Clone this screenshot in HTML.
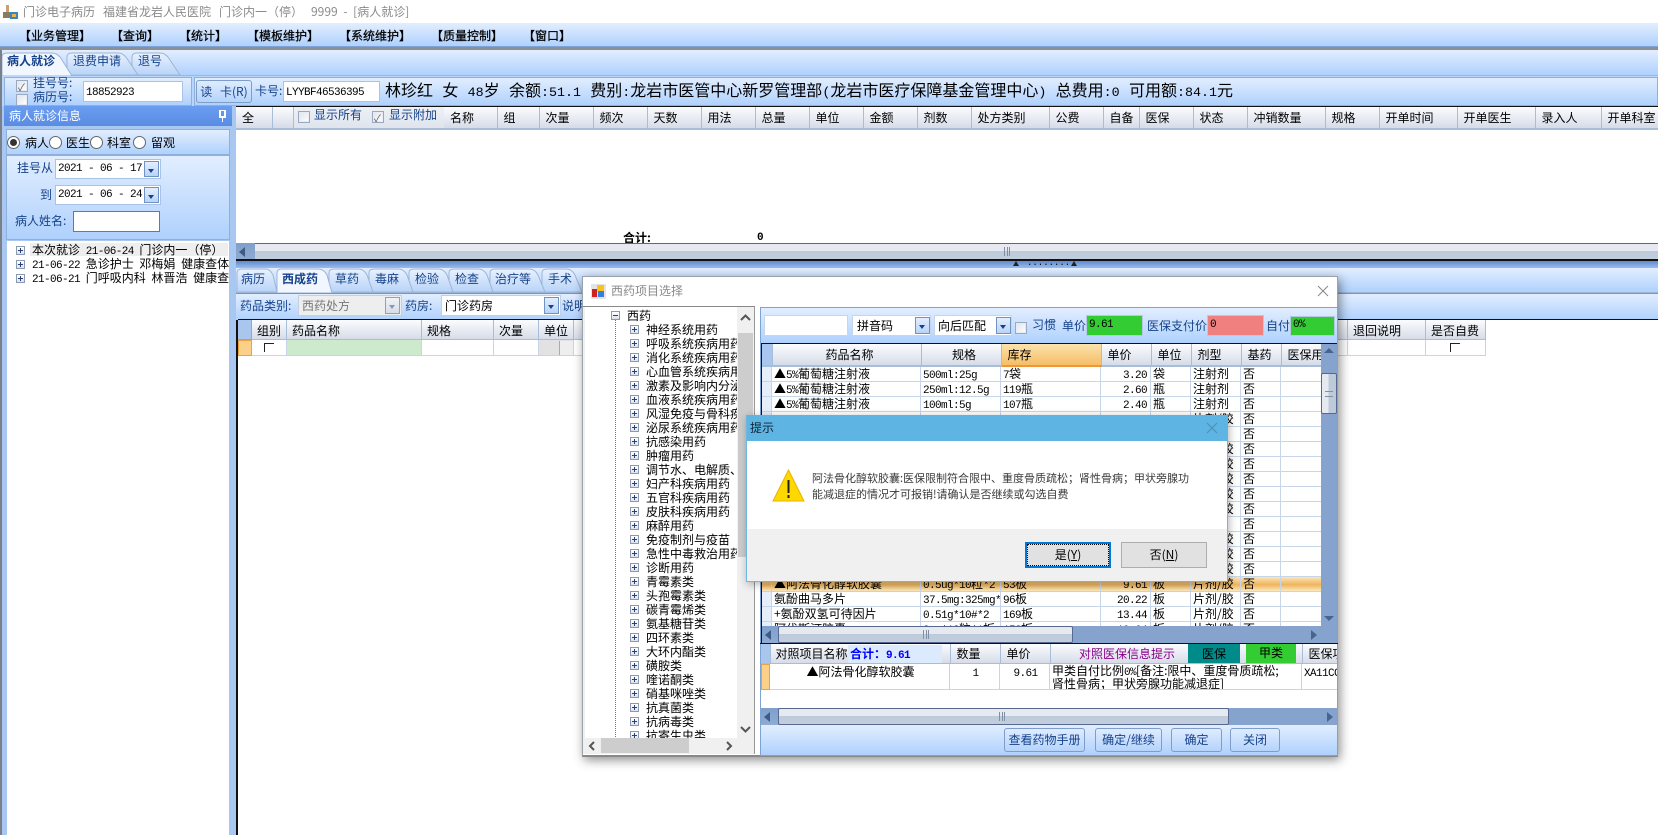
<!DOCTYPE html>
<html lang="zh"><head><meta charset="utf-8"><title>门诊电子病历</title>
<style>
*{box-sizing:border-box}
html,body{margin:0;padding:0;width:1658px;height:835px;overflow:hidden;background:#fff}
body{position:relative;font:12px/14px "WenQuanYi Zen Hei","Noto Sans CJK SC","Liberation Sans",sans-serif;color:#000}
.a{position:absolute}
.t{position:absolute;white-space:nowrap;line-height:14px}
.b{color:#15428b}
.mn{-webkit-text-stroke:.25px #000}
.m{font:11px/10px "Liberation Mono",monospace;letter-spacing:-.6px}
.l{font:13.33px/10px "Liberation Mono",monospace;white-space:pre}
.bar{position:absolute;background:linear-gradient(#e2eeff,#afd1fd)}
.in{position:absolute;background:#fff;border:1px solid #a9c3e6}
.dd{position:absolute;background:linear-gradient(#e3eeff,#b9d4f8);border:1px solid #6f93c4}
.dd:after{content:"";position:absolute;left:3px;top:7px;border:3px solid transparent;border-top:4px solid #15428b}
.cb{position:absolute;width:12px;height:12px;background:linear-gradient(135deg,#dfe3ea,#fff);border:1px solid #9aa9bd;box-shadow:inset 0 0 0 1px #e8ecf2}
.ck:after{content:"✓";position:absolute;left:1px;top:-1px;font-size:10px;color:#556}
.rd{position:absolute;width:13px;height:13px;border-radius:50%;background:#fff;border:1px solid #666}
.rd.on:after{content:"";position:absolute;left:2px;top:2px;width:7px;height:7px;border-radius:50%;background:#333}
table{border-collapse:collapse;table-layout:fixed;position:absolute;left:0;top:0}
td{padding:0;overflow:hidden;white-space:nowrap}
.hd td{height:22px;background:linear-gradient(#fbfcfe,#d6dce8);border-right:1px solid #a8bdd8;border-bottom:2px solid #a8bdd8;padding-left:6px;vertical-align:middle}
.dr,.dr tbody,.br,.br tbody{display:block}
.dr tr{display:grid;grid-template-columns:10px 149px 80px 100px 50px 40px 50px 40px 41px;height:15px}
.br tr{display:grid;grid-template-columns:9px 180px 50px 50px 252px 99px;height:26px}
.dr td,.br td{display:block;background:#fff;border-right:1px solid #c6d5e8;border-bottom:1px solid #c6d5e8;padding-left:2px;line-height:14px;height:15px}
.br td{height:26px;padding-top:1px}
.dr td:first-child{background:#e6eefa;padding:0}
.dr .r{text-align:right;padding-right:3px}
.hl td,.hl td:first-child{background:linear-gradient(#fbe6b4,#eeb45e 55%,#fce9bd)}
.hs{position:absolute;border-top:1px solid #56688f;border-bottom:1px solid #56688f;background:linear-gradient(#e6e9ef 45%,#bccad9 46%,#c2cede)}
.ab{position:absolute;background:linear-gradient(#7e9fcb,#8fabd2);}
.ab:after{content:"";position:absolute;left:3px;top:4px;border:5px solid transparent;border-right:6px solid #3e5a86;border-left:0}
.grip{position:absolute;width:6px;height:9px;top:3px;border-left:1px solid #8290a5;border-right:1px solid #8290a5;background:linear-gradient(90deg,transparent 2px,#8290a5 2px,#8290a5 3px,transparent 3px)}
.btn{position:absolute;border:1px solid #7f9dc9;border-radius:3px;background:linear-gradient(#dfecff,#b5d3fb);color:#15428b;text-align:center;line-height:22px}
.px{position:absolute;width:9px;height:9px;border:1px solid #8d99ae;background:linear-gradient(#fff,#dde2ea)}
.px:before{content:"";position:absolute;left:1px;top:3px;width:5px;height:1px;background:#2a3f7a}
.px.p:after{content:"";position:absolute;left:3px;top:1px;width:1px;height:5px;background:#2a3f7a}
.hc{position:absolute;top:320px;height:20px;border-right:1px solid #a8bdd8;border-bottom:1px solid #a8bdd8;background:linear-gradient(#fbfcfe,#d6dce8);line-height:21px;padding-left:5px}
.rc{position:absolute;top:340px;height:16px;border-right:1px solid #c6d5e8;border-bottom:1px solid #c6d5e8;background:#fff}
.cor{position:absolute;width:10px;height:9px;border-left:1px solid #222;border-top:1px solid #222}
</style></head><body>

<!-- title bar -->
<div class="a" style="left:0;top:0;width:1658px;height:23px;background:#fff"></div>
<svg class="a" style="left:3px;top:4px" width="16" height="16" viewBox="0 0 16 16"><rect x="3" y="1" width="3" height="9" fill="#c9a070"/><rect x="0" y="8" width="7" height="6" fill="#8a7a60"/><rect x="7" y="8" width="8" height="7" fill="#3c86b8"/><rect x="9" y="10" width="4" height="3" fill="#e9b44a"/></svg>
<div class="t" style="left:23px;top:5px;color:#8a8a8a">门诊电子病历</div>
<div class="t" style="left:103px;top:5px;color:#8a8a8a">福建省龙岩人民医院</div>
<div class="t" style="left:219px;top:5px;color:#8a8a8a">门诊内一（停）</div>
<div class="t" style="left:311px;top:5px;color:#8a8a8a;word-spacing:3px">9999 - [病人就诊]</div>

<!-- menu -->
<div class="bar" style="left:0;top:23px;width:1658px;height:24px;border-bottom:1px solid #7ea3d4"></div>
<div class="t mn" style="left:19px;top:29px">【业务管理】</div>
<div class="t mn" style="left:111px;top:29px">【查询】</div>
<div class="t mn" style="left:179px;top:29px">【统计】</div>
<div class="t mn" style="left:247px;top:29px">【模板维护】</div>
<div class="t mn" style="left:339px;top:29px">【系统维护】</div>
<div class="t mn" style="left:431px;top:29px">【质量控制】</div>
<div class="t mn" style="left:523px;top:29px">【窗口】</div>
<div class="a" style="left:0;top:47px;width:1658px;height:3px;background:#8b8f96"></div>

<!-- top tabs -->
<div class="bar" style="left:0;top:50px;width:1658px;height:26px;border-bottom:1px solid #9fb6d8"></div>
<svg class="a" style="left:0;top:50px" width="200" height="27">
<defs><linearGradient id="g1" x1="0" x2="0" y1="0" y2="1"><stop offset="0" stop-color="#e8f1ff"/><stop offset="1" stop-color="#b8d4f8"/></linearGradient></defs>
<path d="M132 25V7Q132 3 137 3H160Q166 3 170 10L180 25Z" fill="url(#g1)" stroke="#9db5d6"/>
<path d="M67 25V7Q67 3 72 3H118Q124 3 128 10L138 25Z" fill="url(#g1)" stroke="#9db5d6"/>
<path d="M2 26V7Q2 3 7 3H52Q58 3 62 10L72 26Z" fill="#f2f7ff" stroke="#9db5d6"/></svg>
<div class="t b" style="left:7px;top:54px;font-weight:bold">病人就诊</div>
<div class="t b" style="left:73px;top:54px">退费申请</div>
<div class="t b" style="left:138px;top:54px">退号</div>

<!-- toolbar -->
<div class="a" style="left:0;top:76px;width:1658px;height:46px;background:#b8d5fb"></div>
<div class="bar" style="left:4px;top:77px;width:188px;height:29px;border:1px solid #8fb0dc"></div>
<div class="bar" style="left:194px;top:77px;width:1464px;height:29px;border:1px solid #8fb0dc"></div>
<div class="cb ck" style="left:16px;top:80px"></div>
<div class="cb" style="left:16px;top:94px"></div>
<div class="t b" style="left:33px;top:76px">挂号号:</div>
<div class="t b" style="left:33px;top:90px">病历号:</div>
<div class="in" style="left:83px;top:81px;width:100px;height:21px;padding:2px 2px"><span class="m">18852923</span></div>
<div class="btn" style="left:196px;top:80px;width:56px;height:23px;word-spacing:5px">读 卡(R)</div>
<div class="t b" style="left:255px;top:84px">卡号:</div>
<div class="in" style="left:283px;top:81px;width:97px;height:21px;padding:2px 2px"><span class="m">LYYBF46536395</span></div>
<div class="t" style="left:385px;top:81px;font-size:16px;line-height:17px;word-spacing:1.3px">林珍红<span class="l"> </span>女<span class="l"> 48</span>岁<span class="l"> </span>余额<span class="l">:51.1 </span>费别<span class="l">:</span>龙岩市医管中心新罗管理部<span class="l">(</span>龙岩市医疗保障基金管理中心<span class="l">) </span>总费用<span class="l">:0 </span>可用额<span class="l">:84.1</span>元</div>

<!-- left panel -->
<div class="a" style="left:0;top:106px;width:236px;height:729px;background:#a8c8f2"></div>
<div class="a" style="left:0;top:50px;width:2px;height:785px;background:#7a808a"></div>
<div class="a" style="left:4px;top:106px;width:228px;height:20px;background:linear-gradient(#6a9cf0,#5a8ce2);color:#fff;padding:3px 5px">病人就诊信息</div>
<div class="a" style="left:219px;top:110px;width:7px;height:8px;border:2px solid #fff;border-top-width:1px"></div>
<div class="a" style="left:222px;top:117px;width:1px;height:5px;background:#fff"></div>
<div class="bar" style="left:6px;top:129px;width:224px;height:26px;border:1px solid #8fb0dc"></div>
<div class="rd on" style="left:7px;top:136px"></div><div class="t" style="left:25px;top:136px">病人</div>
<div class="rd" style="left:49px;top:136px"></div><div class="t" style="left:66px;top:136px">医生</div>
<div class="rd" style="left:90px;top:136px"></div><div class="t" style="left:107px;top:136px">科室</div>
<div class="rd" style="left:133px;top:136px"></div><div class="t" style="left:151px;top:136px">留观</div>
<div class="bar" style="left:6px;top:155px;width:224px;height:85px;border:1px solid #8fb0dc"></div>
<div class="t b" style="left:17px;top:161px">挂号从</div>
<div class="in" style="left:55px;top:159px;width:106px;height:20px;padding:0 2px"><span class="m" style="line-height:14px">2021 - 06 - 17</span></div>
<div class="dd" style="left:144px;top:161px;width:15px;height:16px"></div>
<div class="t b" style="left:40px;top:188px">到</div>
<div class="in" style="left:55px;top:185px;width:106px;height:20px;padding:0 2px"><span class="m" style="line-height:14px">2021 - 06 - 24</span></div>
<div class="dd" style="left:144px;top:187px;width:15px;height:16px"></div>
<div class="t b" style="left:15px;top:214px">病人姓名:</div>
<div class="a" style="left:73px;top:211px;width:87px;height:21px;background:#fff;border:1px solid #777"></div>
<div class="a" style="left:7px;top:241px;width:222px;height:594px;background:#fff;overflow:hidden">
<div class="a" style="left:23px;top:2px;width:198px;height:13px;background:#eee"></div>
<div class="px p" style="left:9px;top:5px"></div><div class="px p" style="left:9px;top:19px"></div><div class="px p" style="left:9px;top:33px"></div>
<div class="t" style="left:25px;top:2px;word-spacing:3px">本次就诊 <span class="m">21-06-24</span> 门诊内一（停）</div>
<div class="t" style="left:25px;top:16px;word-spacing:3px"><span class="m">21-06-22</span> 急诊护士 邓梅娟 健康查体</div>
<div class="t" style="left:25px;top:30px;word-spacing:3px"><span class="m">21-06-21</span> 门呼吸内科 林晋浩 健康查</div>
</div>

<!-- main grid -->
<div class="a" style="left:236px;top:106px;width:1422px;height:155px;background:#fff;border-top:1px solid #111;overflow:hidden">
<table style="width:1422px" class="hd"><colgroup><col style="width:36px"><col style="width:21px"><col style="width:151px"><col style="width:53px"><col style="width:42px"><col style="width:54px"><col style="width:54px"><col style="width:54px"><col style="width:54px"><col style="width:54px"><col style="width:54px"><col style="width:54px"><col style="width:54px"><col style="width:78px"><col style="width:54px"><col style="width:36px"><col style="width:54px"><col style="width:54px"><col style="width:78px"><col style="width:54px"><col style="width:78px"><col style="width:78px"><col style="width:66px"><col style="width:57px"></colgroup>
<tr><td>全</td><td></td><td style="border-right:0;background:linear-gradient(#eef1f6,#dfe4ed)"></td><td>名称</td><td>组</td><td>次量</td><td>频次</td><td>天数</td><td>用法</td><td>总量</td><td>单位</td><td>金额</td><td>剂数</td><td>处方类别</td><td>公费</td><td>自备</td><td>医保</td><td>状态</td><td>冲销数量</td><td>规格</td><td>开单时间</td><td>开单医生</td><td>录入人</td><td>开单科室</td></tr></table>
</div>
<div class="cb" style="left:298px;top:111px"></div><div class="t b" style="left:314px;top:108px">显示所有</div>
<div class="cb ck" style="left:372px;top:111px"></div><div class="t b" style="left:389px;top:108px">显示附加</div>
<div class="t" style="left:623px;top:231px;font-weight:bold">合计:</div>
<div class="t m" style="left:757px;top:231px;font-weight:bold;line-height:14px">0</div>
<div class="hs" style="left:255px;top:243px;width:1403px;height:17px"></div>
<div class="ab" style="left:236px;top:243px;width:19px;height:17px"></div>
<div class="grip" style="left:1004px;top:247px"></div>
<div class="a" style="left:236px;top:259px;width:1422px;height:2px;background:#111"></div>

<!-- splitter -->
<div class="a" style="left:236px;top:261px;width:1422px;height:7px;background:linear-gradient(#5e8ad0,#9cbcec)"></div>
<div class="t m" style="left:1027px;top:256px;letter-spacing:0;font-size:9px;line-height:14px">.........</div>
<div class="a" style="left:1013px;top:261px;border:3px solid transparent;border-bottom:5px solid #222;border-top:0"></div>
<div class="a" style="left:1071px;top:261px;border:3px solid transparent;border-bottom:5px solid #222;border-top:0"></div>

<!-- lower tabs -->
<div class="bar" style="left:236px;top:268px;width:1422px;height:25px;border-bottom:1px solid #9fb6d8"></div>
<svg class="a" style="left:236px;top:268px" width="350" height="26">
<path d="M306 24V5Q306 1 311 1H330Q336 1 339 7L346 24Z" fill="url(#g1)" stroke="#9db5d6"/>
<path d="M254 24V5Q254 1 259 1H293Q299 1 302 7L309 24Z" fill="url(#g1)" stroke="#9db5d6"/>
<path d="M213 24V5Q213 1 218 1H242Q248 1 251 7L257 24Z" fill="url(#g1)" stroke="#9db5d6"/>
<path d="M173 24V5Q173 1 178 1H202Q208 1 211 7L217 24Z" fill="url(#g1)" stroke="#9db5d6"/>
<path d="M133 24V5Q133 1 138 1H162Q168 1 171 7L177 24Z" fill="url(#g1)" stroke="#9db5d6"/>
<path d="M93 24V5Q93 1 98 1H122Q128 1 131 7L137 24Z" fill="url(#g1)" stroke="#9db5d6"/>
<path d="M1 24V5Q1 1 6 1H30Q34 1 37 7L41 24Z" fill="url(#g1)" stroke="#9db5d6"/>
<path d="M41 25V5Q41 1 46 1H82Q88 1 91 7L96 25Z" fill="#f2f7ff" stroke="#9db5d6"/></svg>
<div class="t b" style="left:241px;top:272px">病历</div>
<div class="t b" style="left:282px;top:272px;font-weight:bold">西成药</div>
<div class="t b" style="left:335px;top:272px">草药</div>
<div class="t b" style="left:375px;top:272px">毒麻</div>
<div class="t b" style="left:415px;top:272px">检验</div>
<div class="t b" style="left:455px;top:272px">检查</div>
<div class="t b" style="left:495px;top:272px">治疗等</div>
<div class="t b" style="left:548px;top:272px">手术</div>

<!-- lower toolbar -->
<div class="bar" style="left:236px;top:293px;width:1422px;height:27px;border-top:1px solid #6f97cf"></div>
<div class="t b" style="left:240px;top:299px">药品类别:</div>
<div class="a" style="left:298px;top:295px;width:104px;height:21px;background:#eee;border:1px solid #c4cfdf;color:#777;padding:3px 3px">西药处方</div>
<div class="a" style="left:385px;top:297px;width:15px;height:17px;background:linear-gradient(#f0f3f8,#d6dde8);border:1px solid #8fa0b8"></div>
<div class="a" style="left:389px;top:305px;border:3px solid transparent;border-top:4px solid #8a97a8"></div>
<div class="t b" style="left:405px;top:299px">药房:</div>
<div class="a" style="left:441px;top:295px;width:120px;height:21px;background:#fff;border:1px solid #bcd0ea;padding:3px 3px">门诊药房</div>
<div class="dd" style="left:544px;top:297px;width:15px;height:17px"></div>
<div class="t b" style="left:562px;top:299px">说明</div>

<!-- lower grid -->
<div class="a" style="left:236px;top:320px;width:1422px;height:515px;background:#fff;border-left:2px solid #111"></div>
<div class="a" style="left:238px;top:319px;width:1420px;height:1px;background:#111"></div>
<div class="hc" style="left:238px;width:14px;padding:0;background:#a9c6ee;border-color:#8aa8d2"></div>
<div class="hc" style="left:252px;width:35px">组别</div>
<div class="hc" style="left:287px;width:135px">药品名称</div>
<div class="hc" style="left:422px;width:72px">规格</div>
<div class="hc" style="left:494px;width:45px">次量</div>
<div class="hc" style="left:539px;width:35px">单位</div>
<div class="hc" style="left:574px;width:774px"></div>
<div class="hc" style="left:1348px;width:78px">退回说明</div>
<div class="hc" style="left:1426px;width:60px">是否自费</div>
<div class="rc" style="left:238px;width:14px;background:#fdd08a;border:1px solid #f0a040"></div>
<div class="rc" style="left:252px;width:35px"></div><div class="cor" style="left:264px;top:343px"></div>
<div class="rc" style="left:287px;width:135px;background:#cdeacd"></div>
<div class="rc" style="left:422px;width:72px"></div>
<div class="rc" style="left:494px;width:45px"></div>
<div class="rc" style="left:539px;width:35px;background:#e2e2e2"></div>
<div class="a" style="left:559px;top:341px;width:14px;height:14px;background:#eee;border-left:1px solid #aaa"></div>
<div class="rc" style="left:574px;width:774px"></div>
<div class="rc" style="left:1348px;width:78px"></div>
<div class="rc" style="left:1426px;width:60px"></div><div class="cor" style="left:1450px;top:343px"></div>

<!-- drug window -->
<div class="a" style="left:582px;top:276px;width:756px;height:481px;background:#fff;border:1px solid #9aa3ad;border-bottom:2px solid #888;box-shadow:2px 3px 10px rgba(0,0,0,.45)"></div>
<svg class="a" style="left:591px;top:284px" width="15" height="15"><rect width="15" height="15" fill="#e4e4e4"/><rect x="1" y="5" width="5" height="8" fill="#d02020"/><rect x="6" y="1" width="7" height="6" fill="#f5c518"/><rect x="7" y="7" width="6" height="6" fill="#3a7de0"/></svg>
<div class="t" style="left:611px;top:284px;color:#8a8a8a">西药项目选择</div>
<svg class="a" style="left:1317px;top:285px" width="12" height="12"><path d="M1 1L11 11M11 1L1 11" stroke="#888" fill="none"/></svg>

<!-- tree -->
<div class="a" style="left:583px;top:306px;width:172px;height:448px;background:#f0f0f0;border-top:1px solid #888;border-right:1px solid #999"></div>
<div class="a" style="left:585px;top:307px;width:152px;height:431px;background:#fff;overflow:hidden">
<div class="a" style="left:30px;top:12px;height:420px;border-left:1px dotted #777"></div>
<div class="px" style="left:26px;top:4px"></div>
<div class="t" style="left:42px;top:2px">西药</div>
<div class="t" style="left:61px;top:16px;line-height:14px">神经系统用药<br>呼吸系统疾病用药<br>消化系统疾病用药<br>心血管系统疾病用药<br>激素及影响内分泌药<br>血液系统疾病用药<br>风湿免疫与骨科疾病<br>泌尿系统疾病用药<br>抗感染用药<br>肿瘤用药<br>调节水、电解质、酸<br>妇产科疾病用药<br>五官科疾病用药<br>皮肤科疾病用药<br>麻醉用药<br>免疫制剂与疫苗<br>急性中毒救治用药<br>诊断用药<br>青霉素类<br>头孢霉素类<br>碳青霉烯类<br>氨基糖苷类<br>四环素类<br>大环内酯类<br>磺胺类<br>喹诺酮类<br>硝基咪唑类<br>抗真菌类<br>抗病毒类<br>抗寄生虫类</div>
<div class="px p" style="left:45px;top:18px"></div><div class="px p" style="left:45px;top:32px"></div><div class="px p" style="left:45px;top:46px"></div><div class="px p" style="left:45px;top:60px"></div><div class="px p" style="left:45px;top:74px"></div><div class="px p" style="left:45px;top:88px"></div><div class="px p" style="left:45px;top:102px"></div><div class="px p" style="left:45px;top:116px"></div><div class="px p" style="left:45px;top:130px"></div><div class="px p" style="left:45px;top:144px"></div><div class="px p" style="left:45px;top:158px"></div><div class="px p" style="left:45px;top:172px"></div><div class="px p" style="left:45px;top:186px"></div><div class="px p" style="left:45px;top:200px"></div><div class="px p" style="left:45px;top:214px"></div><div class="px p" style="left:45px;top:228px"></div><div class="px p" style="left:45px;top:242px"></div><div class="px p" style="left:45px;top:256px"></div><div class="px p" style="left:45px;top:270px"></div><div class="px p" style="left:45px;top:284px"></div><div class="px p" style="left:45px;top:298px"></div><div class="px p" style="left:45px;top:312px"></div><div class="px p" style="left:45px;top:326px"></div><div class="px p" style="left:45px;top:340px"></div><div class="px p" style="left:45px;top:354px"></div><div class="px p" style="left:45px;top:368px"></div><div class="px p" style="left:45px;top:382px"></div><div class="px p" style="left:45px;top:396px"></div><div class="px p" style="left:45px;top:410px"></div><div class="px p" style="left:45px;top:424px"></div>
</div>
<div class="a" style="left:738px;top:333px;width:15px;height:224px;background:#cdcdcd"></div>
<svg class="a" style="left:740px;top:314px" width="11" height="8"><path d="M1 6L5.500 1.500L10 6" stroke="#555" stroke-width="2" fill="none"/></svg>
<svg class="a" style="left:740px;top:725px" width="11" height="8"><path d="M1 2L5.500 6.500L10 2" stroke="#555" stroke-width="2" fill="none"/></svg>
<div class="a" style="left:601px;top:738px;width:88px;height:15px;background:#cdcdcd"></div>
<svg class="a" style="left:588px;top:741px" width="8" height="10"><path d="M6 1L2 5L6 9" stroke="#555" stroke-width="2" fill="none"/></svg>
<svg class="a" style="left:725px;top:741px" width="8" height="10"><path d="M2 1L6 5L2 9" stroke="#555" stroke-width="2" fill="none"/></svg>

<!-- right pane -->
<div class="a" style="left:760px;top:307px;width:578px;height:449px;border:1px solid #7da2d4;background:#fff"></div>
<div class="bar" style="left:761px;top:308px;width:576px;height:35px"></div>
<div class="a" style="left:764px;top:315px;width:84px;height:21px;background:#fff;border:1px solid #c4d6ee"></div>
<div class="a" style="left:852px;top:315px;width:79px;height:21px;background:#fff;border:1px solid #c4d6ee;padding:3px 4px">拼音码</div>
<div class="dd" style="left:915px;top:317px;width:15px;height:17px"></div>
<div class="a" style="left:934px;top:315px;width:78px;height:21px;background:#fff;border:1px solid #c4d6ee;padding:3px 3px">向后匹配</div>
<div class="dd" style="left:996px;top:317px;width:15px;height:17px"></div>
<div class="cb" style="left:1015px;top:322px"></div>
<div class="t b" style="left:1032px;top:318px">习惯</div>
<div class="t b" style="left:1062px;top:319px">单价</div>
<div class="a m" style="left:1086px;top:315px;width:57px;height:21px;background:#33cc33;border:1px solid #b6c9e2;padding:2px 2px;line-height:14px">9.61</div>
<div class="t b" style="left:1147px;top:319px">医保支付价</div>
<div class="a m" style="left:1207px;top:315px;width:57px;height:21px;background:#f08080;border:1px solid #b6c9e2;padding:2px 2px;line-height:14px">0</div>
<div class="t b" style="left:1266px;top:319px">自付</div>
<div class="a m" style="left:1290px;top:316px;width:45px;height:20px;background:#33cc33;border:1px solid #b6c9e2;padding:1px 2px;line-height:14px">0%</div>

<!-- drug grid -->
<div class="a" style="left:761px;top:343px;width:576px;height:300px;background:#fff;border-top:1px solid #111;border-left:1px solid #111;border-right:1px solid #111;overflow:hidden">
<table style="width:560px;height:23px" class="hd"><colgroup><col style="width:10px"><col style="width:149px"><col style="width:80px"><col style="width:100px"><col style="width:50px"><col style="width:40px"><col style="width:50px"><col style="width:40px"><col style="width:41px"></colgroup>
<tr><td style="background:#a9c6ee;padding:0"></td><td style="text-align:center">药品名称</td><td style="text-align:center">规格</td><td style="background:linear-gradient(#fbe2ac,#f5be68);border-bottom:2px solid #f29536;padding-left:6px">库存</td><td style="padding-left:6px">单价</td><td style="padding-left:6px">单位</td><td style="padding-left:6px">剂型</td><td style="padding-left:6px">基药</td><td>医保用</td></tr></table>
<table style="top:23px;width:560px" class="dr">
<tr><td></td><td>▲<span class="m">5%</span>葡萄糖注射液</td><td><span class="m">500ml:25g</span></td><td><span class="m">7</span>袋</td><td class="r"><span class="m">3.20</span></td><td>袋</td><td>注射剂</td><td>否</td><td></td></tr>
<tr><td></td><td>▲<span class="m">5%</span>葡萄糖注射液</td><td><span class="m">250ml:12.5g</span></td><td><span class="m">119</span>瓶</td><td class="r"><span class="m">2.60</span></td><td>瓶</td><td>注射剂</td><td>否</td><td></td></tr>
<tr><td></td><td>▲<span class="m">5%</span>葡萄糖注射液</td><td><span class="m">100ml:5g</span></td><td><span class="m">107</span>瓶</td><td class="r"><span class="m">2.40</span></td><td>瓶</td><td>注射剂</td><td>否</td><td></td></tr>
<tr><td></td><td></td><td></td><td></td><td></td><td></td><td>片剂/胶</td><td>否</td><td></td></tr>
<tr><td></td><td></td><td></td><td></td><td></td><td></td><td></td><td>否</td><td></td></tr>
<tr><td></td><td></td><td></td><td></td><td></td><td></td><td>片剂/胶</td><td>否</td><td></td></tr>
<tr><td></td><td></td><td></td><td></td><td></td><td></td><td>片剂/胶</td><td>否</td><td></td></tr>
<tr><td></td><td></td><td></td><td></td><td></td><td></td><td>片剂/胶</td><td>否</td><td></td></tr>
<tr><td></td><td></td><td></td><td></td><td></td><td></td><td>片剂/胶</td><td>否</td><td></td></tr>
<tr><td></td><td></td><td></td><td></td><td></td><td></td><td>片剂/胶</td><td>否</td><td></td></tr>
<tr><td></td><td></td><td></td><td></td><td></td><td></td><td></td><td>否</td><td></td></tr>
<tr><td></td><td></td><td></td><td></td><td></td><td></td><td>片剂/胶</td><td>否</td><td></td></tr>
<tr><td></td><td></td><td></td><td></td><td></td><td></td><td>片剂/胶</td><td>否</td><td></td></tr>
<tr><td></td><td></td><td></td><td></td><td></td><td></td><td>片剂/胶</td><td>否</td><td></td></tr>
<tr class="hl"><td></td><td>▲阿法骨化醇软胶囊</td><td><span class="m">0.5ug*10</span>粒<span class="m">*2</span></td><td><span class="m">53</span>板</td><td class="r"><span class="m">9.61</span></td><td>板</td><td>片剂/胶</td><td>否</td><td></td></tr>
<tr><td></td><td>氨酚曲马多片</td><td><span class="m">37.5mg:325mg*</span></td><td><span class="m">96</span>板</td><td class="r"><span class="m">20.22</span></td><td>板</td><td>片剂/胶</td><td>否</td><td></td></tr>
<tr><td></td><td>+氨酚双氢可待因片</td><td><span class="m">0.51g*10#*2</span></td><td><span class="m">169</span>板</td><td class="r"><span class="m">13.44</span></td><td>板</td><td>片剂/胶</td><td>否</td><td></td></tr>
<tr><td></td><td>阿伐斯汀胶囊</td><td><span class="m">8mg*12</span>粒<span class="m">*1</span>板</td><td><span class="m">153</span>板</td><td class="r"><span class="m">19.64</span></td><td>板</td><td>片剂/胶</td><td>否</td><td></td></tr>
</table>
</div>
<!-- v scroll -->
<div class="a" style="left:1321px;top:344px;width:16px;height:282px;background:#86a3cd"></div>
<div class="a" style="left:1324px;top:348px;border:5px solid transparent;border-bottom:5px solid #47648f;border-top:0"></div>
<div class="a" style="left:1324px;top:616px;border:5px solid transparent;border-top:5px solid #47648f;border-bottom:0"></div>
<div class="a" style="left:1321px;top:373px;width:16px;height:41px;background:linear-gradient(90deg,#e6e9ef 45%,#bccad9 46%);border:1px solid #56688f;border-radius:2px"></div>
<div class="a" style="left:1325px;top:391px;width:8px;height:6px;border-top:1px solid #8290a5;border-bottom:1px solid #8290a5"></div>
<!-- h scroll 1 -->
<div class="a" style="left:762px;top:626px;width:575px;height:17px;background:#86a3cd"></div>
<div class="ab" style="left:762px;top:626px;width:16px;height:17px"></div>
<div class="hs" style="left:778px;top:626px;width:295px;height:17px;border:1px solid #56688f;border-radius:2px"></div>
<div class="grip" style="left:923px;top:630px"></div>
<div class="a" style="left:1311px;top:630px;border:5px solid transparent;border-left:6px solid #47648f;border-right:0"></div>
<div class="a" style="left:760px;top:643px;width:578px;height:1px;background:#111"></div>
<!-- bottom grid -->
<div class="a" style="left:761px;top:644px;width:576px;height:64px;background:#fff;overflow:hidden">
<table style="width:640px" class="hd"><colgroup><col style="width:9px"><col style="width:180px"><col style="width:50px"><col style="width:50px"><col style="width:252px"><col style="width:99px"></colgroup>
<tr><td style="background:#a9c6ee;padding:0;height:20px"></td><td style="padding-left:5px;height:20px">对照项目名称</td><td style="height:20px">数量</td><td style="height:20px">单价</td><td style="height:20px"></td><td style="height:20px">医保项目</td></tr></table>
<table style="top:20px;width:640px" class="br">
<tr><td style="background:#fdd08a;border:1px solid #f0a040"></td><td style="text-align:center">▲阿法骨化醇软胶囊</td><td style="text-align:center"><span class="m">1</span></td><td style="text-align:center"><span class="m">9.61</span></td><td style="line-height:12px">甲类自付比例<span class="m">0%</span>[备注:限中、重度骨质疏松;<br>肾性骨病；甲状旁腺功能减退症]</td><td><span class="m">XA11CC</span></td></tr></table>
</div>
<div class="a" style="left:848px;top:645px;width:94px;height:18px;background:#dceafd;color:#0000ff;font-weight:bold;padding:2px 2px">合计：<span class="m" style="font-weight:bold">9.61</span></div>
<div class="t" style="left:1079px;top:647px;color:#8b008b">对照医保信息提示</div>
<div class="a" style="left:1188px;top:644px;width:52px;height:19px;background:#008b8b;text-align:center;line-height:19px">医保</div>
<div class="a" style="left:1246px;top:644px;width:50px;height:19px;background:#33cc33;text-align:center;line-height:17px">甲类</div>
<!-- h scroll 2 -->
<div class="a" style="left:761px;top:708px;width:576px;height:17px;background:#86a3cd"></div>
<div class="ab" style="left:761px;top:708px;width:17px;height:17px"></div>
<div class="hs" style="left:778px;top:708px;width:451px;height:17px;border:1px solid #56688f;border-radius:2px"></div>
<div class="grip" style="left:999px;top:712px"></div>
<div class="a" style="left:1327px;top:712px;border:5px solid transparent;border-left:6px solid #47648f;border-right:0"></div>
<!-- bottom buttons -->
<div class="bar" style="left:761px;top:725px;width:576px;height:30px"></div>
<div class="btn" style="left:1004px;top:728px;width:81px;height:24px">查看药物手册</div>
<div class="btn" style="left:1095px;top:728px;width:67px;height:24px">确定/继续</div>
<div class="btn" style="left:1171px;top:728px;width:51px;height:24px">确定</div>
<div class="btn" style="left:1230px;top:728px;width:50px;height:24px">关闭</div>

<!-- alert dialog -->
<div class="a" style="left:746px;top:415px;width:482px;height:167px;background:#f0f0f0;border:1px solid #6cb8e2;box-shadow:1px 2px 8px rgba(0,0,0,.3)"></div>
<div class="a" style="left:747px;top:415px;width:481px;height:26px;background:#5eb5e3"></div>
<div class="t" style="left:750px;top:421px;color:#123">提示</div>
<svg class="a" style="left:1206px;top:422px" width="12" height="12"><path d="M1 1L11 11M11 1L1 11" stroke="#4a8fb8" fill="none"/></svg>
<div class="a" style="left:747px;top:441px;width:480px;height:88px;background:#fff"></div>
<svg class="a" style="left:772px;top:469px" width="33" height="33" viewBox="0 0 33 33"><path d="M16.500 1L32 32H1Z" fill="#ffd800" stroke="#e6b400"/><path d="M16.500 11V24M16.500 26V29" stroke="#222" stroke-width="2" fill="none"/></svg>
<div class="t" style="left:812px;top:470px;color:#3a3a3a;line-height:16px;font-size:11px">阿法骨化醇软胶囊:医保限制符合限中、重度骨质疏松；肾性骨病；甲状旁腺功<br>能减退症的情况才可报销!请确认是否继续或勾选自费</div>
<div class="a" style="left:1025px;top:542px;width:86px;height:26px;background:#e1e1e1;border:2px solid #0078d7;text-align:center;line-height:22px;outline:1px dotted #000;outline-offset:-3px">是(<u>Y</u>)</div>
<div class="a" style="left:1121px;top:542px;width:86px;height:26px;background:#e1e1e1;border:1px solid #adadad;text-align:center;line-height:24px">否(<u>N</u>)</div>
</body></html>
